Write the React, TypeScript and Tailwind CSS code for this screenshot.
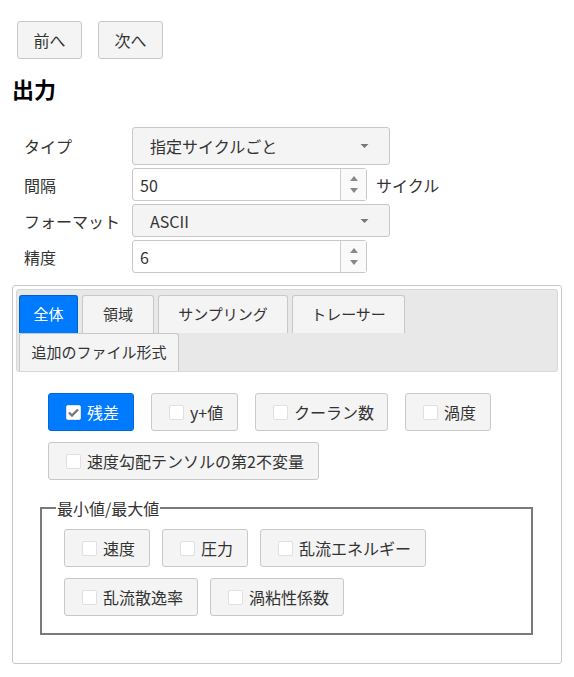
import React from "react";

const font = { fontFamily: '"Noto Sans CJK JP", "Liberation Sans", sans-serif' };

function Caret() {
  return (
    <svg width="9" height="5" viewBox="0 0 9 5" className="absolute right-[20px] top-1/2 -translate-y-1/2">
      <path d="M0.5 0.5 L8.5 0.5 L4.5 4.5 Z" fill="#777" />
    </svg>
  );
}

function Select({ value }: { value: string }) {
  return (
    <div className="relative flex items-center w-[258px] h-full bg-[#f4f4f4] border border-[#c8c8c8] rounded-[3px] pl-[17px] text-[#333]">
      {value}
      <Caret />
    </div>
  );
}

function NumberInput({ value }: { value: string }) {
  return (
    <div className="flex w-[235px] h-full bg-white border border-[#c8c8c8] rounded-[3px] text-[#333]">
      <div className="flex-1 flex items-center pl-[7px]">{value}</div>
      <div className="w-[26px] flex flex-col items-center justify-center gap-[7px] border-l border-[#d0d0d0] bg-[#fafafa]">
        <svg width="8" height="5" viewBox="0 0 8 5"><path d="M0 5 L8 5 L4 0 Z" fill="#888" /></svg>
        <svg width="8" height="5" viewBox="0 0 8 5"><path d="M0 0 L8 0 L4 5 Z" fill="#888" /></svg>
      </div>
    </div>
  );
}

function Check({ label, w, checked = false }: { label: string; w: number; checked?: boolean }) {
  return (
    <div
      className={
        "flex items-center h-[38px] rounded-[3px] border pl-[17px] gap-[6px] whitespace-nowrap " +
        (checked ? "bg-[#007bff] border-[#0069d9] text-white" : "bg-[#f4f4f4] border-[#c8c8c8] text-[#333]")
      }
      style={{ width: w }}
    >
      <span className="flex items-center justify-center w-[15px] h-[15px] bg-white border border-[#e0e0e0] rounded-[2px]">
        {checked && (
          <svg width="11" height="9" viewBox="0 0 11 9">
            <path d="M1 4.5 L4 7.5 L10 1.5" stroke="#777" strokeWidth="2.4" fill="none" />
          </svg>
        )}
      </span>
      <span>{label}</span>
    </div>
  );
}

function Tab({ label, w, active = false }: { label: string; w: number; active?: boolean }) {
  return (
    <div
      className={
        "flex items-center justify-center h-[38px] rounded-t-[3px] border border-b-0 whitespace-nowrap text-[15px] " +
        (active ? "bg-[#007bff] border-[#0062cc] text-white" : "bg-[#f4f4f4] border-[#c8c8c8] text-[#333]")
      }
      style={{ width: w }}
    >
      {label}
    </div>
  );
}

export default function App() {
  return (
    <div className="px-3 text-[16px] text-[#333] bg-white min-h-[677px]" style={font}>
      <div className="flex gap-[16px] pt-[21px] pl-[5px]">
        <button className="w-[65px] h-[38px] bg-[#f4f4f4] border border-[#c8c8c8] rounded-[3px] text-[#333]">前へ</button>
        <button className="w-[65px] h-[38px] bg-[#f4f4f4] border border-[#c8c8c8] rounded-[3px] text-[#333]">次へ</button>
      </div>
      <h2 className="mt-[14px] text-[22px] font-bold text-black leading-[30px]">出力</h2>

      <div className="mt-[24px] pl-3 flex flex-col gap-[3px]">
        <div className="flex items-center h-[38px]">
          <div className="w-[108px]">タイプ</div>
          <Select value="指定サイクルごと" />
        </div>
        <div className="flex items-center h-[33px]">
          <div className="w-[108px]">間隔</div>
          <NumberInput value="50" />
          <div className="ml-[9px]">サイクル</div>
        </div>
        <div className="flex items-center h-[33px]">
          <div className="w-[108px]">フォーマット</div>
          <Select value="ASCII" />
        </div>
        <div className="flex items-center h-[33px]">
          <div className="w-[108px]">精度</div>
          <NumberInput value="6" />
        </div>
      </div>

      <div className="mt-[12px] border border-[#c8c8c8] rounded-[3px] p-[3px] pb-[28px]">
        <div className="bg-[#e8e8e8] border border-[#d8d8d8] rounded-[3px] pl-[2px] pt-[5px] flex flex-wrap gap-x-[4px] w-full">
          <Tab label="全体" w={59} active />
          <Tab label="領域" w={72} />
          <Tab label="サンプリング" w={130} />
          <Tab label="トレーサー" w={113} />
          <div className="basis-full h-0" />
          <Tab label="追加のファイル形式" w={160} />
        </div>

        <div className="px-[24px] pt-[21px]">
          <div className="ml-[8px] flex flex-col gap-[11px]">
            <div className="flex gap-[17px]">
              <Check label="残差" w={86} checked />
              <Check label="y+値" w={87} />
              <Check label="クーラン数" w={133} />
              <Check label="渦度" w={86} />
            </div>
            <div className="flex gap-[17px]">
              <Check label="速度勾配テンソルの第2不変量" w={271} />
            </div>
          </div>

          <fieldset className="mt-[19px] border-2 border-[#7a7a7a] px-[22px] pb-[17px] w-[493px]" style={{ borderStyle: "solid" }}>
            <legend className="ml-[-8px] px-[1px] leading-[18px] text-[#333]">最小値/最大値</legend>
            <div className="mt-[12px] flex flex-col gap-[11px]">
              <div className="flex gap-[12px]">
                <Check label="速度" w={86} />
                <Check label="圧力" w={86} />
                <Check label="乱流エネルギー" w={166} />
              </div>
              <div className="flex gap-[12px]">
                <Check label="乱流散逸率" w={134} />
                <Check label="渦粘性係数" w={134} />
              </div>
            </div>
          </fieldset>
        </div>
      </div>
    </div>
  );
}
